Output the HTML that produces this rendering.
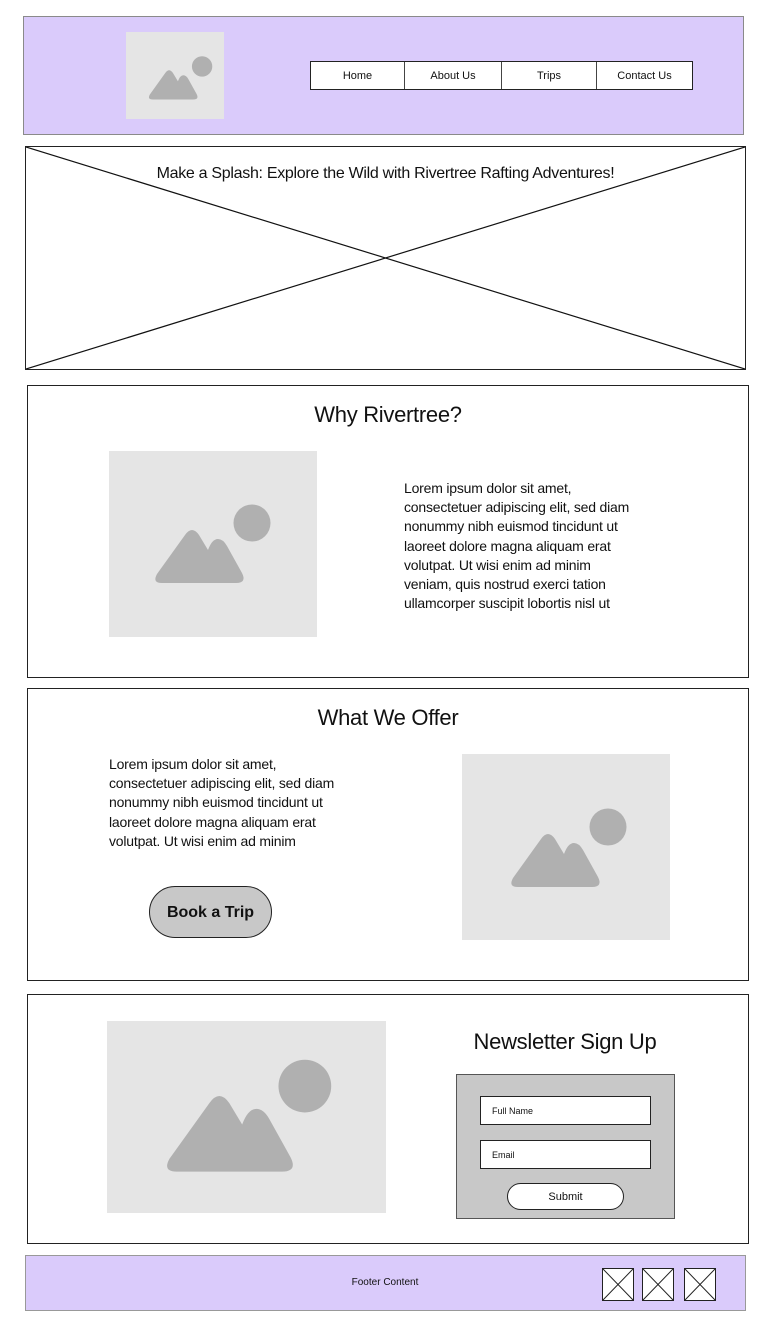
<!DOCTYPE html>
<html><head><meta charset="utf-8"><style>
*{margin:0;padding:0;box-sizing:border-box}
body{width:765px;height:1328px;background:#fff;position:relative;font-family:"Liberation Sans",sans-serif;color:#111;overflow:hidden}
.a{position:absolute}
.box{position:absolute;border:1px solid #222}
.img{position:absolute;background:#e5e5e5}
.img svg{position:absolute;overflow:visible}
.txt{position:absolute;font-size:14px;line-height:19.2px;letter-spacing:-0.2px}
.h{position:absolute;font-size:22px;text-align:center;letter-spacing:-0.3px}
.nav{position:absolute;left:310px;top:61px;width:383px;height:29px;border:1px solid #222;background:#fff;display:flex}
.nav div{border-right:1px solid #444;font-size:11px;display:flex;align-items:center;justify-content:center}
.nav div:last-child{border-right:none}
.inp{position:absolute;left:480px;width:171px;height:29px;background:#fff;border:1px solid #222;font-size:9px;padding-left:11px;line-height:29px}
.x{position:absolute;top:1268px;width:32px;height:33px;border:1px solid #222;background:#fff}
</style></head><body>
<svg width="0" height="0" style="position:absolute"><defs><g id="ic" fill="#b0b0b0"><circle cx="102" cy="19" r="18.5"/><path d="M12,79 Q2,79 7,70 L35,31 Q42,21 49,31 L58,46 Q62,35 68,35 Q73,35 77,42 L92,69 Q97,79 86,79 Z"/></g></defs></svg>

<div class="a" style="left:23px;top:16px;width:721px;height:119px;background:#dacbfb;border:1px solid #8a8a8a"></div>
<div class="img" style="left:126px;top:32px;width:98px;height:87px"><svg style="left:20px;top:24px" width="66" height="44" viewBox="0 0 120 80"><use href="#ic"/></svg></div>
<div class="nav"><div style="width:94px">Home</div><div style="width:97px">About Us</div><div style="width:95px">Trips</div><div style="flex:1">Contact Us</div></div>

<div class="box" style="left:25px;top:146px;width:721px;height:224px"><svg class="a" style="left:0;top:0" width="719" height="222"><line x1="0" y1="0" x2="719" y2="222" stroke="#111" stroke-width="1.2"/><line x1="719" y1="0" x2="0" y2="222" stroke="#111" stroke-width="1.2"/></svg></div>
<div class="a" style="left:25px;top:165px;width:721px;text-align:center;font-size:16px;letter-spacing:-0.3px">Make a Splash: Explore the Wild with Rivertree Rafting Adventures!</div>

<div class="box" style="left:27px;top:385px;width:722px;height:293px"></div>
<div class="h" style="left:27px;top:402px;width:722px">Why Rivertree?</div>
<div class="img" style="left:109px;top:451px;width:208px;height:186px"><svg style="left:41px;top:53px" width="120" height="80" viewBox="0 0 120 80"><use href="#ic"/></svg></div>
<div class="txt" style="left:404px;top:479px">Lorem ipsum dolor sit amet,<br>consectetuer adipiscing elit, sed diam<br>nonummy nibh euismod tincidunt ut<br>laoreet dolore magna aliquam erat<br>volutpat. Ut wisi enim ad minim<br>veniam, quis nostrud exerci tation<br>ullamcorper suscipit lobortis nisl ut</div>

<div class="box" style="left:27px;top:688px;width:722px;height:293px"></div>
<div class="h" style="left:27px;top:705px;width:722px">What We Offer</div>
<div class="txt" style="left:109px;top:755px">Lorem ipsum dolor sit amet,<br>consectetuer adipiscing elit, sed diam<br>nonummy nibh euismod tincidunt ut<br>laoreet dolore magna aliquam erat<br>volutpat. Ut wisi enim ad minim</div>
<div class="a" style="left:149px;top:886px;width:123px;height:52px;background:#c8c8c8;border:1px solid #222;border-radius:26px;font-weight:bold;font-size:16px;text-align:center;line-height:52px">Book a Trip</div>
<div class="img" style="left:462px;top:754px;width:208px;height:186px"><svg style="left:44px;top:54px" width="120" height="80" viewBox="0 0 120 80"><use href="#ic"/></svg></div>

<div class="box" style="left:27px;top:994px;width:722px;height:250px"></div>
<div class="img" style="left:107px;top:1021px;width:279px;height:192px"><svg style="left:52px;top:38px" width="172" height="114" viewBox="0 0 120 80"><use href="#ic"/></svg></div>
<div class="h" style="left:450px;top:1029px;width:230px">Newsletter Sign Up</div>
<div class="a" style="left:456px;top:1074px;width:219px;height:145px;background:#c8c8c8;border:1px solid #555"></div>
<div class="inp" style="top:1096px">Full Name</div>
<div class="inp" style="top:1140px">Email</div>
<div class="a" style="left:507px;top:1183px;width:117px;height:27px;background:#fff;border:1px solid #222;border-radius:14px;text-align:center;font-size:11px;line-height:27px">Submit</div>

<div class="a" style="left:25px;top:1255px;width:721px;height:56px;background:#dacbfb;border:1px solid #999"></div>
<div class="a" style="left:300px;top:1277px;width:170px;text-align:center;font-size:10px">Footer Content</div>
<div class="x" style="left:602px"><svg width="30" height="31"><path d="M0,0L30,31M30,0L0,31" stroke="#222"/></svg></div>
<div class="x" style="left:642px"><svg width="30" height="31"><path d="M0,0L30,31M30,0L0,31" stroke="#222"/></svg></div>
<div class="x" style="left:684px"><svg width="30" height="31"><path d="M0,0L30,31M30,0L0,31" stroke="#222"/></svg></div>
</body></html>
